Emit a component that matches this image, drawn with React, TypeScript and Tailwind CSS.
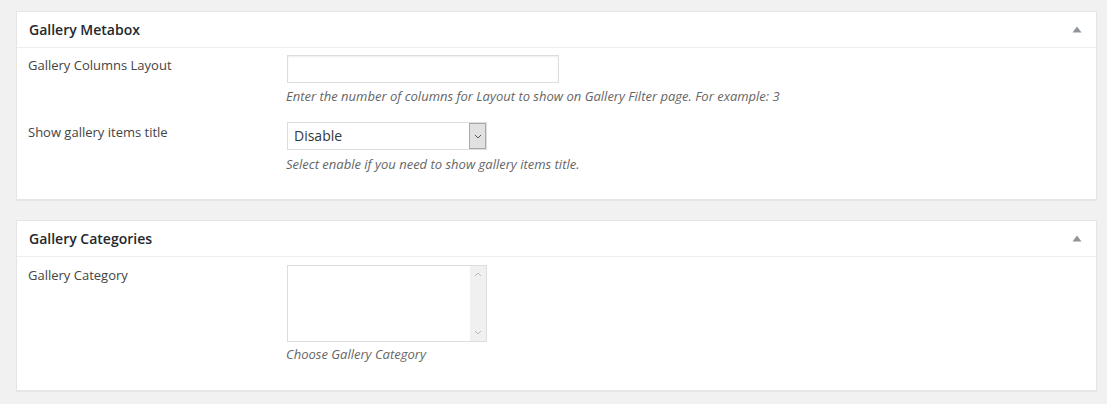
import React from "react";

const font = { fontFamily: '"Open Sans", "Liberation Sans", sans-serif' };

function Toggle() {
  return (
    <svg width="10" height="7" viewBox="0 0 10 7" className="mr-[14px]">
      <path d="M5 0.5 L9.5 6.5 L0.5 6.5 Z" fill="#8f959b" />
    </svg>
  );
}

function Postbox({ title, children }: { title: string; children: React.ReactNode }) {
  return (
    <div className="bg-white border border-[#e5e5e5] shadow-[0_1px_1px_rgba(0,0,0,0.04)]">
      <div className="h-[36px] flex items-center justify-between border-b border-[#eeeeee] pl-[12px]">
        <h2 className="text-[14px] font-semibold text-[#23282d] leading-none">{title}</h2>
        <Toggle />
      </div>
      {children}
    </div>
  );
}

function Row({ label, children, className = "" }: { label: string; children: React.ReactNode; className?: string }) {
  return (
    <div className={`flex ${className}`}>
      <div className="w-[259px] shrink-0 pt-[1px] text-[13px] leading-[18px] text-[#444]">{label}</div>
      <div className="flex flex-col">{children}</div>
    </div>
  );
}

function Desc({ children, className = "" }: { children: React.ReactNode; className?: string }) {
  return <p className={`-ml-[1px] text-[13px] italic leading-[18px] text-[#666] ${className}`}>{children}</p>;
}

export default function App() {
  return (
    <div className="min-h-[404px] bg-[#f1f1f1] pt-[11px] px-[16px] pb-[13px] text-[#444]" style={font}>
      <div className="w-[1081px] flex flex-col gap-[20px]">
        <Postbox title="Gallery Metabox">
          <div className="pt-[7px] pb-[26px] pl-[11px]">
            <Row label="Gallery Columns Layout">
              <input
                type="text"
                className="w-[272px] h-[28px] border border-[#dddddd] bg-white shadow-[inset_0_1px_2px_rgba(0,0,0,0.07)] outline-none"
              />
              <Desc className="mt-[4px]">
                Enter the number of columns for Layout to show on Gallery Filter page. For example: 3
              </Desc>
            </Row>
            <Row label="Show gallery items title" className="mt-[17px]">
              <div className="w-[200px] h-[28px] flex border border-[#dddddd] bg-white">
                <span className="flex-1 pl-[6px] text-[14px] leading-[26px] text-[#32373c]">Disable</span>
                <span className="w-[17px] flex items-center justify-center bg-[#e1e1e1] border border-[#a9a9a9]">
                  <svg width="8" height="5" viewBox="0 0 8 5">
                    <path d="M1 1 L4 4 L7 1" fill="none" stroke="#555" strokeWidth="1" />
                  </svg>
                </span>
              </div>
              <Desc className="mt-[5px]">Select enable if you need to show gallery items title.</Desc>
            </Row>
          </div>
        </Postbox>

        <Postbox title="Gallery Categories">
          <div className="pt-[8px] pb-[27px] pl-[11px]">
            <Row label="Gallery Category">
              <div className="w-[200px] h-[77px] flex border border-[#dddddd] bg-white">
                <div className="flex-1" />
                <div className="w-[16px] bg-[#f0f0f0] flex flex-col items-center justify-between py-[6px]">
                  <svg width="8" height="5" viewBox="0 0 8 5">
                    <path d="M1 4 L4 1 L7 4" fill="none" stroke="#b8b8b8" strokeWidth="1" />
                  </svg>
                  <svg width="8" height="5" viewBox="0 0 8 5">
                    <path d="M1 1 L4 4 L7 1" fill="none" stroke="#b8b8b8" strokeWidth="1" />
                  </svg>
                </div>
              </div>
              <Desc className="mt-[3px]">Choose Gallery Category</Desc>
            </Row>
          </div>
        </Postbox>
      </div>
    </div>
  );
}
